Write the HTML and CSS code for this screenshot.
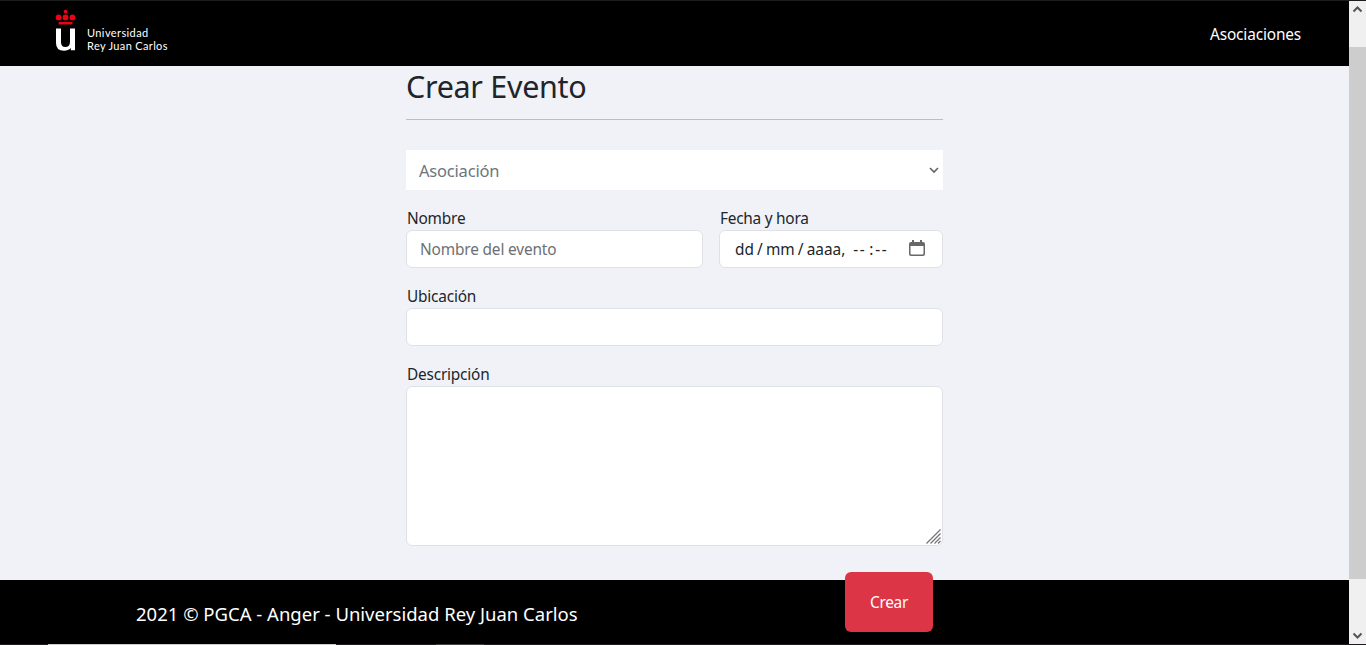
FILE: index.html
```html
<!DOCTYPE html>
<html lang="es">
<head>
<meta charset="utf-8">
<title>Crear Evento</title>
<link rel="stylesheet" href="styles.css">
</head>
<body>
<div class="window">
  <div class="page">
    <header class="navbar">
      <a class="brand">
        <svg class="brand-mark" width="22" height="42" viewBox="0 0 22 42">
          <g fill="#f00014">
            <circle cx="10.5" cy="2.6" r="1.8"/>
            <circle cx="3.6" cy="8.4" r="2.9"/>
            <circle cx="10.5" cy="8.4" r="2.9"/>
            <circle cx="17.4" cy="8.4" r="2.9"/>
            <rect x="3.6" y="13" width="13.8" height="2.4"/>
          </g>
          <path fill="#fff" d="M1 19.5H6V33Q6 38 10.2 38Q15 38 15 33V19.5H20V41.3H15.8V39Q13.4 41.8 9 41.8Q1 41.8 1 34Z"/>
        </svg>
        <span class="brand-name"><span class="brand-top">Universidad</span><span class="brand-bottom">Rey Juan Carlos</span></span>
      </a>
      <a class="nav-link">Asociaciones</a>
    </header>
    <main class="content">
      <form class="event-form">
        <h1 class="title">Crear Evento</h1>
        <div class="select">
          <span class="select-text">Asociación</span>
          <svg class="chevron" width="10" height="8" viewBox="0 0 10 8"><path d="M1 2L5 6L9 2" fill="none" stroke="#5d646b" stroke-width="1.6"/></svg>
        </div>
        <div class="row">
          <div class="field">
            <label class="label">Nombre</label>
            <div class="control placeholder"><span>Nombre del evento</span></div>
          </div>
          <div class="field">
            <label class="label label-date">Fecha y hora</label>
            <div class="control date">
              <span class="date-parts"><span>dd</span><span class="sep">/</span><span>mm</span><span class="sep">/</span><span>aaaa</span><span class="comma">,</span><span class="dash">--</span><span class="colon">:</span><span class="dash">--</span></span>
              <svg class="calendar" width="16" height="17" viewBox="0 0 16 17"><path fill="#68686b" fill-rule="evenodd" d="M3 0H5V2H11V0H13V2H14Q16 2 16 4V14Q16 16 14 16H2Q0 16 0 14V4Q0 2 2 2H3ZM1.5 6V13.5Q1.5 14.5 2.5 14.5H13.5Q14.5 14.5 14.5 13.5V6Z"/></svg>
            </div>
          </div>
        </div>
        <div class="field">
          <label class="label">Ubicación</label>
          <div class="control"></div>
        </div>
        <div class="field">
          <label class="label">Descripción</label>
          <div class="control area">
            <svg width="15" height="15" viewBox="0 0 15 15"><path d="M0.5 14.5L14.5 0.5M4.5 14.5L14.5 4.5M8.5 14.5L14.5 8.5M12 14.5L14.5 12" stroke="#757575" stroke-width="1.3"/></svg>
          </div>
        </div>
        <button class="submit" type="button">Crear</button>
      </form>
    </main>
    <footer class="footer">2021 © PGCA - Anger - Universidad Rey Juan Carlos</footer>
  </div>
  <div class="scrollbar">
    <svg width="17" height="17" viewBox="0 0 17 17"><path d="M4.5 10.5L8.5 6.5L12.5 10.5" fill="none" stroke="#555" stroke-width="2"/></svg>
    <div class="thumb"></div>
    <svg width="17" height="17" viewBox="0 0 17 17"><path d="M4.5 6.5L8.5 10.5L12.5 6.5" fill="none" stroke="#555" stroke-width="2"/></svg>
  </div>
</div>
<div class="bottom-edge"><span class="edge-light"></span><span class="edge-mid"></span></div>
</body>
</html>
```
FILE: styles.css
```css
* { box-sizing: border-box; }
body {
  margin: 0;
  width: 1366px;
  height: 645px;
  overflow: hidden;
  background: #000;
  color: #212529;
  font: 15.4px/24px "Noto Sans", "Open Sans", sans-serif;
  white-space: nowrap;
}
svg { display: block; flex: none; }
.window {
  display: flex;
  height: 644px;
  border-top: 1px solid #1c1c1c;
}
.page {
  display: flex;
  flex-direction: column;
  width: 1349px;
  background: #f0f2f8;
}
.navbar {
  display: flex;
  justify-content: space-between;
  height: 65px;
  padding: 8px 48px 0 55px;
  background: #000;
  color: #fff;
}
.brand { display: flex; gap: 10px; }
.brand-name {
  display: flex;
  flex-direction: column;
  padding-top: 17px;
  font: 11px/13px Lato, sans-serif;
}
.brand-top { letter-spacing: 0.4px; }
.brand-bottom { letter-spacing: 0.35px; }
.nav-link { padding-top: 14px; letter-spacing: -0.15px; }
.content {
  height: 514px;
  padding-left: 406px;
}
.event-form {
  display: flex;
  flex-direction: column;
  width: 537px;
}
.title {
  height: 54px;
  margin: 0 0 30px;
  border-bottom: 1px solid #bbbdc3;
  font-size: 30.5px;
  font-weight: 400;
  letter-spacing: -0.3px;
  line-height: 40px;
}
.select {
  display: flex;
  align-items: center;
  justify-content: space-between;
  height: 40px;
  margin-bottom: 16px;
  padding: 2px 4px 0 13px;
  background: #fff;
  color: #6c757d;
  font-size: 16.5px;
  letter-spacing: -0.2px;
}
.chevron { margin-bottom: 2px; }
.row {
  display: grid;
  grid-template-columns: 297px 224px;
  gap: 16px;
}
.field { margin-bottom: 16px; }
.label {
  display: block;
  height: 24px;
  padding: 1px 0 0 1px;
  letter-spacing: -0.2px;
}
.label-date { letter-spacing: -0.25px; }
.control {
  display: flex;
  align-items: center;
  height: 38px;
  padding: 2px 13px 0;
  border: 1px solid #dee2e6;
  border-radius: 6px;
  background: #fff;
}
.placeholder { color: #6c6f73; letter-spacing: -0.15px; }
.date { justify-content: space-between; padding: 2px 17px 0 15px; }
.calendar { margin-bottom: 3px; }
.date-parts { display: flex; }
.sep { width: 12px; text-align: center; }
.comma { width: 12px; }
.dash { width: 14px; letter-spacing: 1.6px; }
.colon { width: 8px; text-align: center; }
.area {
  align-items: flex-end;
  justify-content: flex-end;
  height: 160px;
  padding: 1px;
}
.submit {
  z-index: 1;
  align-self: flex-end;
  width: 88px;
  height: 60px;
  margin: 10px 10px 0 0;
  padding: 2px 0 0;
  border: 0;
  border-radius: 6px;
  background: #dc3545;
  color: #fff;
  font: inherit;
  letter-spacing: -0.3px;
}
.footer {
  height: 64px;
  padding: 22px 0 0 136px;
  background: #000;
  color: #fff;
  font-size: 18.5px;
}
.scrollbar {
  display: flex;
  flex-direction: column;
  width: 17px;
  background: #f0f0f0;
}
.thumb { height: 532px; margin: 29px 0 48px; background: #cdcdcd; }
.bottom-edge {
  display: flex;
  gap: 100px;
  height: 1px;
  padding-left: 48px;
  background: #1d1b1e;
}
.edge-light { width: 288px; background: #ccc; }
.edge-mid { width: 48px; background: #444; }
```
